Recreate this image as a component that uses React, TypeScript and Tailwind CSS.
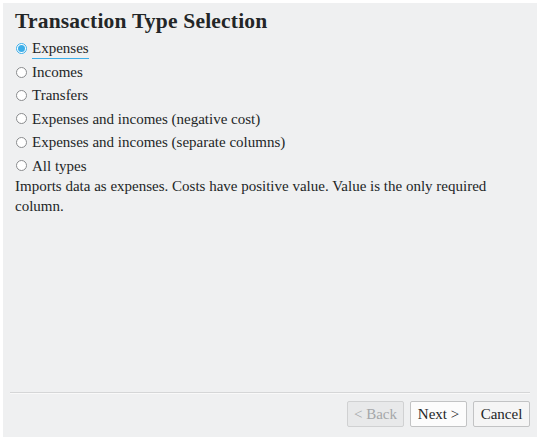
import React from "react";

const options = [
  "Expenses",
  "Incomes",
  "Transfers",
  "Expenses and incomes (negative cost)",
  "Expenses and incomes (separate columns)",
  "All types",
];

export default function App() {
  return (
    <div className="w-[545px] h-[442px] bg-white p-[3px] pr-[8px] pb-[5px]" style={{ fontFamily: '"Liberation Serif", "DejaVu Serif", serif' }}>
      <div className="h-full bg-[#eff0f1] flex flex-col text-[#232627]">
        <div className="px-3 pt-[5px]">
          <h1 className="text-[21.5px] font-bold leading-[26px] tracking-[0.2px]">Transaction Type Selection</h1>
          <div className="mt-[3px] flex flex-col">
            {options.map((o, i) => (
              <div key={o} className="flex items-center h-[23.4px] gap-[5px] ml-[1px]">
                {i === 0 ? (
                  <span className="w-[11px] h-[11px] rounded-full border border-[#3daee9] bg-white flex items-center justify-center">
                    <span className="w-[7px] h-[7px] rounded-full bg-[#3daee9]" />
                  </span>
                ) : (
                  <span className="w-[11px] h-[11px] rounded-full border border-[#8a8c8e] bg-white" />
                )}
                <span className={"text-[15px] leading-[20px] " + (i === 0 ? "border-b border-[#3daee9]" : "")}>{o}</span>
              </div>
            ))}
          </div>
          <p className="text-[15px] leading-[20px] -mt-[1px] max-w-[505px]">
            Imports data as expenses. Costs have positive value. Value is the only required column.
          </p>
        </div>
        <div className="flex-1" />
        <div className="mx-[7px] h-[2px] border-t border-[#d5d6d7] bg-white/60" />
        <div className="flex justify-end gap-[6px] px-[7px] pt-[7px] pb-[10px]">
          <button className="w-[57px] h-[26px] border border-[#d0d1d2] bg-[#e8e9ea] text-[#a5a7a9] text-[15px] rounded-[2px]">&lt; Back</button>
          <button className="w-[57px] h-[26px] border border-[#c2c3c4] bg-[#fcfcfc] text-[15px] rounded-[2px]">Next &gt;</button>
          <button className="w-[57px] h-[26px] border border-[#c2c3c4] bg-[#f5f5f5] text-[15px] rounded-[2px]">Cancel</button>
        </div>
      </div>
    </div>
  );
}
